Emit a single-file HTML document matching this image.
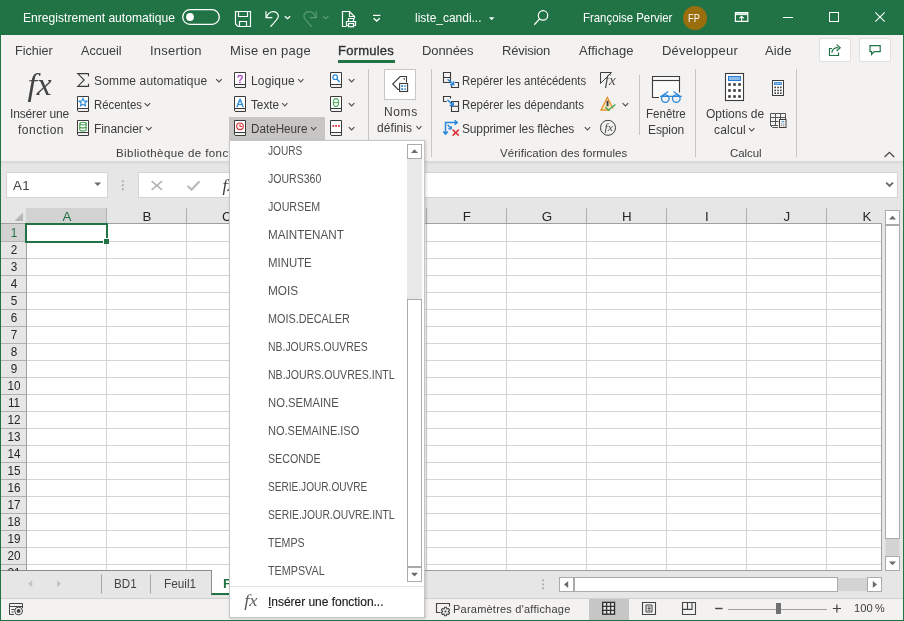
<!DOCTYPE html>
<html lang="fr">
<head>
<meta charset="utf-8">
<title>liste_candidats - Excel</title>
<style>
html,body{margin:0;padding:0;}
body{width:904px;height:621px;overflow:hidden;position:relative;background:#e6e6e6;font-family:"Liberation Sans",sans-serif;}
#win{position:absolute;left:0;top:0;width:904px;height:621px;overflow:hidden;}
#win *{position:absolute;box-sizing:border-box;}
.t{white-space:pre;line-height:normal;transform-origin:0 0;}
svg{overflow:visible;}
#title{left:0;top:0;width:904px;height:35px;background:#217346;}
#tabs{left:1px;top:35px;width:902px;height:30px;background:#f3f2f1;}
#ribbon{left:1px;top:65px;width:902px;height:96px;background:#f3f2f1;}
#rshadow{left:1px;top:161px;width:902px;height:4px;background:linear-gradient(#d6d6d6,#e6e6e6);}
.vsep{width:1px;background:#c8c6c4;}
#bl{left:0;top:35px;width:1px;height:586px;background:#217346;}
#br{left:903px;top:35px;width:1px;height:586px;background:#217346;}
#bb{left:0;top:620px;width:904px;height:1px;background:#217346;}
.tbtn{background:#fff;border:1px solid #e1dfdd;border-radius:2px;}
#namebox,#fxbox{background:#fff;border:1px solid #d4d4d4;}
#gridwrap{will-change:transform;left:1px;top:207px;width:881px;height:364px;background:#fff;overflow:hidden;}
#sheetbar{left:1px;top:571px;width:902px;height:27px;background:#e6e6e6;}
#status{left:1px;top:598px;width:902px;height:22px;background:#f3f2f1;}
#menu{left:229px;top:140px;width:196px;height:478px;background:#fff;border:1px solid #c6c6c6;box-shadow:1px 1px 3px rgba(0,0,0,.18);}
</style>
</head>
<body>
<div id="win">
<div id="title"></div>
<div id="tabs"></div>
<div id="ribbon"></div>
<div id="rshadow"></div>

<!-- tab underline + top-right buttons -->
<div style="left:338px;top:60px;width:57px;height:3px;background:#217346"></div>
<div class="tbtn" style="left:819px;top:38px;width:32px;height:24px"></div>
<div class="tbtn" style="left:859px;top:38px;width:32px;height:24px"></div>

<!-- ribbon highlights / separators -->
<div style="left:229px;top:117px;width:96px;height:24px;background:#c8c6c4"></div>
<div class="vsep" style="left:368px;top:69px;height:88px"></div>
<div class="vsep" style="left:431px;top:69px;height:88px"></div>
<div class="vsep" style="left:639px;top:75px;height:60px"></div>
<div class="vsep" style="left:695px;top:69px;height:88px"></div>
<div class="vsep" style="left:796px;top:69px;height:88px"></div>
<div style="left:384px;top:69px;width:32px;height:31px;background:#fff;border:1px solid #c8c6c4"></div>

<!-- formula bar -->
<div id="namebox" style="left:6px;top:172px;width:102px;height:26px"></div>
<div id="fxbox" style="left:138px;top:172px;width:760px;height:26px"></div>

<!-- grid -->
<div id="gridwrap">
<div style="left:0;top:0;width:881px;height:17px;background:#e6e6e6"></div>
<div style="left:0;top:17px;width:26px;height:347px;background:#e6e6e6"></div>
<div style="left:25px;top:1px;width:81px;height:15px;background:#d2d2d2"></div>
<div style="left:0;top:17px;width:26px;height:17px;background:#d2d2d2"></div>
<div style="left:105px;top:17px;width:1px;height:347px;background:#d4d4d4"></div>
<div style="left:105px;top:1px;width:1px;height:15px;background:#b1b1b1"></div>
<div style="left:185px;top:17px;width:1px;height:347px;background:#d4d4d4"></div>
<div style="left:185px;top:1px;width:1px;height:15px;background:#b1b1b1"></div>
<div style="left:265px;top:17px;width:1px;height:347px;background:#d4d4d4"></div>
<div style="left:265px;top:1px;width:1px;height:15px;background:#b1b1b1"></div>
<div style="left:345px;top:17px;width:1px;height:347px;background:#d4d4d4"></div>
<div style="left:345px;top:1px;width:1px;height:15px;background:#b1b1b1"></div>
<div style="left:425px;top:17px;width:1px;height:347px;background:#d4d4d4"></div>
<div style="left:425px;top:1px;width:1px;height:15px;background:#b1b1b1"></div>
<div style="left:505px;top:17px;width:1px;height:347px;background:#d4d4d4"></div>
<div style="left:505px;top:1px;width:1px;height:15px;background:#b1b1b1"></div>
<div style="left:585px;top:17px;width:1px;height:347px;background:#d4d4d4"></div>
<div style="left:585px;top:1px;width:1px;height:15px;background:#b1b1b1"></div>
<div style="left:665px;top:17px;width:1px;height:347px;background:#d4d4d4"></div>
<div style="left:665px;top:1px;width:1px;height:15px;background:#b1b1b1"></div>
<div style="left:745px;top:17px;width:1px;height:347px;background:#d4d4d4"></div>
<div style="left:745px;top:1px;width:1px;height:15px;background:#b1b1b1"></div>
<div style="left:825px;top:17px;width:1px;height:347px;background:#d4d4d4"></div>
<div style="left:825px;top:1px;width:1px;height:15px;background:#b1b1b1"></div>
<div style="left:25px;top:34px;width:855px;height:1px;background:#d4d4d4"></div>
<div style="left:0;top:34px;width:26px;height:1px;background:#b1b1b1"></div>
<div style="left:25px;top:51px;width:855px;height:1px;background:#d4d4d4"></div>
<div style="left:0;top:51px;width:26px;height:1px;background:#b1b1b1"></div>
<div style="left:25px;top:68px;width:855px;height:1px;background:#d4d4d4"></div>
<div style="left:0;top:68px;width:26px;height:1px;background:#b1b1b1"></div>
<div style="left:25px;top:85px;width:855px;height:1px;background:#d4d4d4"></div>
<div style="left:0;top:85px;width:26px;height:1px;background:#b1b1b1"></div>
<div style="left:25px;top:102px;width:855px;height:1px;background:#d4d4d4"></div>
<div style="left:0;top:102px;width:26px;height:1px;background:#b1b1b1"></div>
<div style="left:25px;top:119px;width:855px;height:1px;background:#d4d4d4"></div>
<div style="left:0;top:119px;width:26px;height:1px;background:#b1b1b1"></div>
<div style="left:25px;top:136px;width:855px;height:1px;background:#d4d4d4"></div>
<div style="left:0;top:136px;width:26px;height:1px;background:#b1b1b1"></div>
<div style="left:25px;top:153px;width:855px;height:1px;background:#d4d4d4"></div>
<div style="left:0;top:153px;width:26px;height:1px;background:#b1b1b1"></div>
<div style="left:25px;top:170px;width:855px;height:1px;background:#d4d4d4"></div>
<div style="left:0;top:170px;width:26px;height:1px;background:#b1b1b1"></div>
<div style="left:25px;top:187px;width:855px;height:1px;background:#d4d4d4"></div>
<div style="left:0;top:187px;width:26px;height:1px;background:#b1b1b1"></div>
<div style="left:25px;top:204px;width:855px;height:1px;background:#d4d4d4"></div>
<div style="left:0;top:204px;width:26px;height:1px;background:#b1b1b1"></div>
<div style="left:25px;top:221px;width:855px;height:1px;background:#d4d4d4"></div>
<div style="left:0;top:221px;width:26px;height:1px;background:#b1b1b1"></div>
<div style="left:25px;top:238px;width:855px;height:1px;background:#d4d4d4"></div>
<div style="left:0;top:238px;width:26px;height:1px;background:#b1b1b1"></div>
<div style="left:25px;top:255px;width:855px;height:1px;background:#d4d4d4"></div>
<div style="left:0;top:255px;width:26px;height:1px;background:#b1b1b1"></div>
<div style="left:25px;top:272px;width:855px;height:1px;background:#d4d4d4"></div>
<div style="left:0;top:272px;width:26px;height:1px;background:#b1b1b1"></div>
<div style="left:25px;top:289px;width:855px;height:1px;background:#d4d4d4"></div>
<div style="left:0;top:289px;width:26px;height:1px;background:#b1b1b1"></div>
<div style="left:25px;top:306px;width:855px;height:1px;background:#d4d4d4"></div>
<div style="left:0;top:306px;width:26px;height:1px;background:#b1b1b1"></div>
<div style="left:25px;top:323px;width:855px;height:1px;background:#d4d4d4"></div>
<div style="left:0;top:323px;width:26px;height:1px;background:#b1b1b1"></div>
<div style="left:25px;top:340px;width:855px;height:1px;background:#d4d4d4"></div>
<div style="left:0;top:340px;width:26px;height:1px;background:#b1b1b1"></div>
<div style="left:25px;top:357px;width:855px;height:1px;background:#d4d4d4"></div>
<div style="left:0;top:357px;width:26px;height:1px;background:#b1b1b1"></div>
<div style="left:0;top:16px;width:881px;height:1px;background:#9f9f9f"></div>
<div style="left:25px;top:17px;width:1px;height:347px;background:#9f9f9f"></div>
<div style="left:880px;top:16px;width:1px;height:348px;background:#9f9f9f"></div>
<div style="left:0;top:363px;width:211px;height:1px;background:#8c8c8c"></div>
<div style="left:275px;top:363px;width:606px;height:1px;background:#9f9f9f"></div>
<span class="t" style="left:45.900000000000006px;width:40px;text-align:center;top:2px;font-size:13.33px;color:#217346">A</span>
<span class="t" style="left:125.9px;width:40px;text-align:center;top:2px;font-size:13.33px;color:#262626">B</span>
<span class="t" style="left:205.9px;width:40px;text-align:center;top:2px;font-size:13.33px;color:#262626">C</span>
<span class="t" style="left:285.9px;width:40px;text-align:center;top:2px;font-size:13.33px;color:#262626">D</span>
<span class="t" style="left:365.9px;width:40px;text-align:center;top:2px;font-size:13.33px;color:#262626">E</span>
<span class="t" style="left:445.9px;width:40px;text-align:center;top:2px;font-size:13.33px;color:#262626">F</span>
<span class="t" style="left:525.9px;width:40px;text-align:center;top:2px;font-size:13.33px;color:#262626">G</span>
<span class="t" style="left:605.9px;width:40px;text-align:center;top:2px;font-size:13.33px;color:#262626">H</span>
<span class="t" style="left:685.9px;width:40px;text-align:center;top:2px;font-size:13.33px;color:#262626">I</span>
<span class="t" style="left:765.9px;width:40px;text-align:center;top:2px;font-size:13.33px;color:#262626">J</span>
<span class="t" style="left:845.9px;width:40px;text-align:center;top:2px;font-size:13.33px;color:#262626">K</span>
<span class="t" style="left:0px;width:26px;text-align:center;top:18px;font-size:13.33px;color:#217346;transform:scaleX(.88);transform-origin:13.5px 0">1</span>
<span class="t" style="left:0px;width:26px;text-align:center;top:35px;font-size:13.33px;color:#262626;transform:scaleX(.88);transform-origin:13.5px 0">2</span>
<span class="t" style="left:0px;width:26px;text-align:center;top:52px;font-size:13.33px;color:#262626;transform:scaleX(.88);transform-origin:13.5px 0">3</span>
<span class="t" style="left:0px;width:26px;text-align:center;top:69px;font-size:13.33px;color:#262626;transform:scaleX(.88);transform-origin:13.5px 0">4</span>
<span class="t" style="left:0px;width:26px;text-align:center;top:86px;font-size:13.33px;color:#262626;transform:scaleX(.88);transform-origin:13.5px 0">5</span>
<span class="t" style="left:0px;width:26px;text-align:center;top:103px;font-size:13.33px;color:#262626;transform:scaleX(.88);transform-origin:13.5px 0">6</span>
<span class="t" style="left:0px;width:26px;text-align:center;top:120px;font-size:13.33px;color:#262626;transform:scaleX(.88);transform-origin:13.5px 0">7</span>
<span class="t" style="left:0px;width:26px;text-align:center;top:137px;font-size:13.33px;color:#262626;transform:scaleX(.88);transform-origin:13.5px 0">8</span>
<span class="t" style="left:0px;width:26px;text-align:center;top:154px;font-size:13.33px;color:#262626;transform:scaleX(.88);transform-origin:13.5px 0">9</span>
<span class="t" style="left:0px;width:26px;text-align:center;top:171px;font-size:13.33px;color:#262626;transform:scaleX(.88);transform-origin:13.5px 0">10</span>
<span class="t" style="left:0px;width:26px;text-align:center;top:188px;font-size:13.33px;color:#262626;transform:scaleX(.88);transform-origin:13.5px 0">11</span>
<span class="t" style="left:0px;width:26px;text-align:center;top:205px;font-size:13.33px;color:#262626;transform:scaleX(.88);transform-origin:13.5px 0">12</span>
<span class="t" style="left:0px;width:26px;text-align:center;top:222px;font-size:13.33px;color:#262626;transform:scaleX(.88);transform-origin:13.5px 0">13</span>
<span class="t" style="left:0px;width:26px;text-align:center;top:239px;font-size:13.33px;color:#262626;transform:scaleX(.88);transform-origin:13.5px 0">14</span>
<span class="t" style="left:0px;width:26px;text-align:center;top:256px;font-size:13.33px;color:#262626;transform:scaleX(.88);transform-origin:13.5px 0">15</span>
<span class="t" style="left:0px;width:26px;text-align:center;top:273px;font-size:13.33px;color:#262626;transform:scaleX(.88);transform-origin:13.5px 0">16</span>
<span class="t" style="left:0px;width:26px;text-align:center;top:290px;font-size:13.33px;color:#262626;transform:scaleX(.88);transform-origin:13.5px 0">17</span>
<span class="t" style="left:0px;width:26px;text-align:center;top:307px;font-size:13.33px;color:#262626;transform:scaleX(.88);transform-origin:13.5px 0">18</span>
<span class="t" style="left:0px;width:26px;text-align:center;top:324px;font-size:13.33px;color:#262626;transform:scaleX(.88);transform-origin:13.5px 0">19</span>
<span class="t" style="left:0px;width:26px;text-align:center;top:341px;font-size:13.33px;color:#262626;transform:scaleX(.88);transform-origin:13.5px 0">20</span>
<span class="t" style="left:0px;width:26px;text-align:center;top:358px;font-size:13.33px;color:#262626;transform:scaleX(.88);transform-origin:13.5px 0">21</span>
<svg style="left:8px;top:4px" width="15" height="11"><path d="M14 1.5V10H5.5Z" fill="#b7b7b7"/></svg>
<div style="left:24px;top:16px;width:83px;height:20px;border:2px solid #217346"></div>
<div style="left:102px;top:31px;width:5px;height:5px;background:#217346;border-left:1px solid #fff;border-top:1px solid #fff;box-sizing:content-box"></div>
</div>

<!-- sheet bar & status -->
<div id="sheetbar"></div>
<div id="status"></div>

<svg style="left:0;top:0;will-change:transform" width="904" height="621" viewBox="0 0 904 621"><rect x="182.7" y="9.7" width="36.6" height="14.6" rx="7.3" fill="none" stroke="#fff" stroke-width="1.3"/>
<circle cx="190" cy="17" r="3.9" fill="#fff"/>
<path d="M235.5 11.5H250.5V26.5H238L235.5 24Z M238.5 11.5V16.5H247.5V11.5 M239.5 26.5V21.5H246.5V26.5" fill="none" stroke="#fff" stroke-width="1.2"/>
<path d="M266 11.3V17.6H272.3" fill="none" stroke="#fff" stroke-width="1.2"/>
<path d="M266.2 17.4C268 13.5 271 11.6 273.6 11.7C276.8 11.9 278.6 14.4 278.3 16.8C278 19 276.5 20.5 270.4 26.7" fill="none" stroke="#fff" stroke-width="1.2"/>
<path d="M284.8 16.2L287.5 18.7L290.2 16.2" fill="none" stroke="#fff" stroke-width="1.3"/>
<path d="M316.2 11.3V17.6H309.9" fill="none" stroke="#5b9a78" stroke-width="1.2"/>
<path d="M316 17.4C314.2 13.5 311.2 11.6 308.6 11.7C305.4 11.9 303.6 14.4 303.9 16.8C304.2 19 305.7 20.5 311.8 26.7" fill="none" stroke="#5b9a78" stroke-width="1.2"/>
<path d="M323 16.2L325.7 18.7L328.4 16.2" fill="none" stroke="#5b9a78" stroke-width="1.3"/>
<path d="M346.5 26.5H342.5V11.5H349.5L354.5 16.5V18.5 M349.5 11.5V16.5H354.5" fill="none" stroke="#fff" stroke-width="1.2"/>
<path d="M348.5 21.5V18.5H353.5V21.5 M348.5 25.5H346.5V21.5H355.5V25.5H353.5" fill="none" stroke="#fff" stroke-width="1.2"/>
<rect x="348.5" y="23.5" width="5" height="3.2" fill="#217346" stroke="#fff" stroke-width="1.2"/>
<path d="M373 15.4H380.4" stroke="#fff" stroke-width="1.2"/>
<path d="M373.6 18.2L376.7 21L379.8 18.2" fill="none" stroke="#fff" stroke-width="1.3"/>
<path d="M489 17.2H494.4L491.7 20.2Z" fill="#fff"/>
<circle cx="543" cy="15.4" r="4.7" fill="none" stroke="#fff" stroke-width="1.2"/>
<path d="M539.6 18.9L534.3 24.7" stroke="#fff" stroke-width="1.3"/>
<circle cx="695" cy="18" r="12" fill="#9a6d0d"/>
<path d="M735.4 12.7H747.8V21.4H735.4Z M735.4 13.2H747.8" fill="none" stroke="#fff" stroke-width="1.2"/>
<path d="M735.4 14.6H747.8" stroke="#fff" stroke-width="1"/>
<path d="M741.6 21V16.4 M739.4 18.4L741.6 16.3L743.8 18.4" fill="none" stroke="#fff" stroke-width="1.1"/>
<path d="M783 17.5H793" stroke="#fff" stroke-width="1"/>
<rect x="829.5" y="12.5" width="9" height="9" fill="none" stroke="#fff" stroke-width="1"/>
<path d="M875.3 12.3L884.7 21.7M884.7 12.3L875.3 21.7" stroke="#fff" stroke-width="1.1"/>
<path d="M832 48.5H829.5V55.5H838.5V52.5" fill="none" stroke="#217346" stroke-width="1.2"/>
<path d="M831.8 52.6C832.3 49 835 47.6 838.2 47.6" fill="none" stroke="#217346" stroke-width="1.2"/>
<path d="M836.6 44.6L840.2 47.8L836.6 51" fill="none" stroke="#217346" stroke-width="1.2"/>
<path d="M870 45.6H880.2V51.6H874.2L871.6 54.4V51.6H870Z" fill="none" stroke="#217346" stroke-width="1.2"/>
<path d="M88.5 76.3V73.6H77.8L84.2 80L77.8 86.4H88.5V83.7" fill="none" stroke="#3b3b3b" stroke-width="1.1"/>
<path d="M77.5 96.5H88.5V111.5H79Q77.5 111.5 77.5 110Z M77.5 108.5H88.5" fill="#fff" stroke="#3b3b3b" stroke-width="1"/>
<path d="M78.5 109H88V111H79Q78.5 111 78.5 110Z" fill="#f3f2f1"/>
<path d="M77.5 120.5H88.5V135.5H79Q77.5 135.5 77.5 134Z M77.5 132.5H88.5" fill="#fff" stroke="#3b3b3b" stroke-width="1"/>
<path d="M78.5 133H88V135H79Q78.5 135 78.5 134Z" fill="#f3f2f1"/>
<path d="M83.00 98.20L84.12 100.86L86.99 101.10L84.81 102.99L85.47 105.80L83.00 104.30L80.53 105.80L81.19 102.99L79.01 101.10L81.88 100.86Z" fill="none" stroke="#2b88d8" stroke-width="1.1"/>
<path d="M79.8 123.6V129.8C79.8 131.4 86.2 131.4 86.2 129.8V123.6" fill="none" stroke="#3f9b4a" stroke-width="1.1"/>
<ellipse cx="83" cy="123.6" rx="3.2" ry="1.4" fill="none" stroke="#3f9b4a" stroke-width="1.1"/>
<path d="M79.8 126.7C79.8 128.3 86.2 128.3 86.2 126.7" fill="none" stroke="#3f9b4a" stroke-width="1.1"/>
<path d="M234.5 72.5H245.5V87.5H236Q234.5 87.5 234.5 86Z M234.5 84.5H245.5" fill="#fff" stroke="#3b3b3b" stroke-width="1"/>
<path d="M235.5 85H245V87H236Q235.5 87 235.5 86Z" fill="#f3f2f1"/>
<path d="M234.5 96.5H245.5V111.5H236Q234.5 111.5 234.5 110Z M234.5 108.5H245.5" fill="#fff" stroke="#3b3b3b" stroke-width="1"/>
<path d="M235.5 109H245V111H236Q235.5 111 235.5 110Z" fill="#f3f2f1"/>
<path d="M234.5 120.5H245.5V135.5H236Q234.5 135.5 234.5 134Z M234.5 132.5H245.5" fill="#fff" stroke="#3b3b3b" stroke-width="1"/>
<path d="M235.5 133H245V135H236Q235.5 135 235.5 134Z" fill="#f3f2f1"/>
<text x="240" y="83" font-family="Liberation Sans,sans-serif" font-size="11" font-weight="400" fill="#a33cc4" stroke="#a33cc4" stroke-width=".3" text-anchor="middle">?</text>
<text x="240" y="106.6" font-family="Liberation Sans,sans-serif" font-size="10.5" font-weight="400" fill="#2b88d8" stroke="#2b88d8" stroke-width=".35" text-anchor="middle">A</text>
<circle cx="240" cy="126.3" r="3.3" fill="none" stroke="#e3343a" stroke-width="1.2"/>
<path d="M240 124.2V126.5H242" fill="none" stroke="#e3343a" stroke-width="1.1"/>
<path d="M330.5 72.5H341.5V87.5H332Q330.5 87.5 330.5 86Z M330.5 84.5H341.5" fill="#fff" stroke="#3b3b3b" stroke-width="1"/>
<path d="M331.5 85H341V87H332Q331.5 87 331.5 86Z" fill="#f3f2f1"/>
<path d="M330.5 96.5H341.5V111.5H332Q330.5 111.5 330.5 110Z M330.5 108.5H341.5" fill="#fff" stroke="#3b3b3b" stroke-width="1"/>
<path d="M331.5 109H341V111H332Q331.5 111 331.5 110Z" fill="#f3f2f1"/>
<path d="M330.5 120.5H341.5V135.5H332Q330.5 135.5 330.5 134Z M330.5 132.5H341.5" fill="#fff" stroke="#3b3b3b" stroke-width="1"/>
<path d="M331.5 133H341V135H332Q331.5 135 331.5 134Z" fill="#f3f2f1"/>
<circle cx="335.2" cy="77.2" r="2.3" fill="none" stroke="#2b88d8" stroke-width="1.2"/>
<path d="M336.9 79L339.6 82" stroke="#2b88d8" stroke-width="1.3"/>
<ellipse cx="336" cy="102.6" rx="2.6" ry="4" fill="none" stroke="#4ea85a" stroke-width="1.1"/>
<path d="M333.5 102.6H338.5" stroke="#4ea85a" stroke-width="1.1"/>
<rect x="332.4" y="125" width="1.8" height="1.8" fill="#e3343a"/>
<rect x="335.2" y="125" width="1.8" height="1.8" fill="#e3343a"/>
<rect x="338.0" y="125" width="1.8" height="1.8" fill="#e3343a"/>
<path d="M216.2 79.1L219.0 82.0L221.8 79.1" fill="none" stroke="#4a4a4a" stroke-width="1.1"/>
<path d="M144.6 103.1L147.39999999999998 106.0L150.2 103.1" fill="none" stroke="#4a4a4a" stroke-width="1.1"/>
<path d="M146 127.1L148.8 130.0L151.6 127.1" fill="none" stroke="#4a4a4a" stroke-width="1.1"/>
<path d="M298.2 79.1L300.79999999999995 82.0L303.4 79.1" fill="none" stroke="#4a4a4a" stroke-width="1.1"/>
<path d="M282.2 103.1L284.79999999999995 106.0L287.4 103.1" fill="none" stroke="#4a4a4a" stroke-width="1.1"/>
<path d="M311 127.1L313.6 130.0L316.2 127.1" fill="none" stroke="#4a4a4a" stroke-width="1.1"/>
<path d="M348.8 79.1L351.6 82.0L354.4 79.1" fill="none" stroke="#4a4a4a" stroke-width="1.1"/>
<path d="M348.8 103.1L351.6 106.0L354.4 103.1" fill="none" stroke="#4a4a4a" stroke-width="1.1"/>
<path d="M348.8 127.1L351.6 130.0L354.4 127.1" fill="none" stroke="#4a4a4a" stroke-width="1.1"/>
<path d="M416.4 126.1L418.9 129.0L421.4 126.1" fill="none" stroke="#4a4a4a" stroke-width="1.1"/>
<path d="M622.6 103.1L625.4000000000001 106.0L628.2 103.1" fill="none" stroke="#4a4a4a" stroke-width="1.1"/>
<path d="M584.8 127.1L587.5 130.0L590.2 127.1" fill="none" stroke="#4a4a4a" stroke-width="1.1"/>
<path d="M749 128.1L751.7 131.0L754.4 128.1" fill="none" stroke="#4a4a4a" stroke-width="1.1"/>
<text x="27.4" y="94.8" font-family="Liberation Serif,serif" font-style="italic" font-size="31" fill="#444" textLength="24.2" lengthAdjust="spacingAndGlyphs">fx</text>
<path d="M399.5 89.5H398L392.7 84L400.2 76.5H406.5V82.5" fill="none" stroke="#3b3b3b" stroke-width="1.1"/>
<rect x="403.6" y="78.2" width="1.4" height="1.4" fill="#3b3b3b"/>
<rect x="399.6" y="83.5" width="8" height="8" fill="#fff" stroke="#3b3b3b" stroke-width="1.1"/>
<rect x="401.2" y="85.2" width="1.8" height="1.8" fill="#2b88d8"/><rect x="401.2" y="88.2" width="1.8" height="1.8" fill="#2b88d8"/>
<rect x="404" y="85.5" width="2.2" height="1.2" fill="#2b88d8"/><rect x="404" y="88.5" width="2.2" height="1.2" fill="#2b88d8"/>
<path d="M443.5 72.5H450.5V82.5H443.5Z M443.5 77.5H450.5" fill="none" stroke="#3b3b3b" stroke-width="1.1"/>
<path d="M455 82.5H458.5V87.5H451.5V85.6" fill="none" stroke="#3b3b3b" stroke-width="1.1"/>
<path d="M447.6 79.2L453.2 84.4 M450 84.8H453.6V81.2" fill="none" stroke="#2b88d8" stroke-width="1.5"/>
<path d="M446.6 101.5H443.5V96.5H450.5V98.6" fill="none" stroke="#3b3b3b" stroke-width="1.1"/>
<path d="M451.5 101.5H458.5V111.5H451.5Z M451.5 106.3H458.5" fill="none" stroke="#3b3b3b" stroke-width="1.1"/>
<path d="M447.4 99.8L452.8 105 M449.6 105.4H453.2V101.8" fill="none" stroke="#2b88d8" stroke-width="1.5"/>
<path d="M445.5 133.8V122.5H457 M443.2 131.4L445.5 134L447.8 131.4 M454.6 120.2L457.2 122.5L454.6 124.8" fill="none" stroke="#2b88d8" stroke-width="1.5"/>
<path d="M447.6 124.8L450.8 128.4 M448.2 128.9H451.2V125.9" fill="none" stroke="#2b88d8" stroke-width="1.3"/>
<path d="M452.6 129.6L458.8 135.6M458.8 129.6L452.6 135.6" stroke="#e3343a" stroke-width="1.5"/>
<path d="M600.5 72.5H611.5L600.5 83.5Z" fill="none" stroke="#3b3b3b" stroke-width="1"/>
<text x="604.8" y="84.8" font-family="Liberation Serif,serif" font-style="italic" font-size="15" fill="#4a4a4a" textLength="11" lengthAdjust="spacingAndGlyphs">fx</text>
<path d="M607.4 97.4L601 110H613.8Z" fill="#fbe3bd" stroke="#e8912d" stroke-width="1.3" stroke-linejoin="miter"/>
<rect x="606.6" y="100.8" width="1.9" height="5.4" fill="#3b3b3b"/>
<rect x="610" y="108.6" width="5" height="2.4" fill="#f3f2f1"/>
<path d="M605.4 107L608.4 110.2L615.4 104.4" fill="none" stroke="#3aa655" stroke-width="1.3"/>
<circle cx="608" cy="127.8" r="7.5" fill="none" stroke="#3b3b3b" stroke-width="1"/>
<text x="604.4" y="130.8" font-family="Liberation Serif,serif" font-style="italic" font-size="11" fill="#4a4a4a" textLength="8.6" lengthAdjust="spacingAndGlyphs">fx</text>
<path d="M659 97.5H652.5V76.5H679.5V92.5" fill="#fafafa" stroke="#3b3b3b" stroke-width="1.1"/>
<path d="M652.5 80.5H679.5" stroke="#3b3b3b" stroke-width="1.1"/>
<circle cx="665.3" cy="98.6" r="3.8" fill="#f3f2f1" stroke="#2b88d8" stroke-width="1.3"/><circle cx="676.3" cy="98.6" r="3.8" fill="#f3f2f1" stroke="#2b88d8" stroke-width="1.3"/>
<path d="M660 96.3H681.8 M661.4 96.2L668.2 91.6 M680.2 96.2L673.4 91.6" fill="none" stroke="#2b88d8" stroke-width="1.25"/>
<rect x="725.5" y="73.5" width="18" height="27" fill="#fff" stroke="#3b3b3b" stroke-width="1.1"/>
<rect x="728.5" y="76.5" width="12" height="4" fill="#8dbde8" stroke="#2b7cd3" stroke-width="1"/>
<rect x="728.2" y="83.2" width="2.6" height="2.6" fill="#3b3b3b"/>
<rect x="733.2" y="83.2" width="2.6" height="2.6" fill="#3b3b3b"/>
<rect x="738.2" y="83.2" width="2.6" height="2.6" fill="#3b3b3b"/>
<rect x="728.2" y="89.2" width="2.6" height="2.6" fill="#3b3b3b"/>
<rect x="733.2" y="89.2" width="2.6" height="2.6" fill="#3b3b3b"/>
<rect x="738.2" y="89.2" width="2.6" height="2.6" fill="#3b3b3b"/>
<rect x="728.2" y="95.2" width="2.6" height="2.6" fill="#3b3b3b"/>
<rect x="733.2" y="95.2" width="2.6" height="2.6" fill="#3b3b3b"/>
<rect x="738.2" y="95.2" width="2.6" height="2.6" fill="#3b3b3b"/>
<rect x="772.5" y="80.5" width="11" height="15" fill="#fff" stroke="#3b3b3b" stroke-width="1"/>
<rect x="774.6" y="82.6" width="6.8" height="2" fill="#8dbde8" stroke="#2b7cd3" stroke-width=".8"/>
<rect x="774.4" y="86.6" width="1.6" height="1.6" fill="#3b3b3b"/>
<rect x="777.2" y="86.6" width="1.6" height="1.6" fill="#3b3b3b"/>
<rect x="780" y="86.6" width="1.6" height="1.6" fill="#3b3b3b"/>
<rect x="774.4" y="89.6" width="1.6" height="1.6" fill="#3b3b3b"/>
<rect x="777.2" y="89.6" width="1.6" height="1.6" fill="#3b3b3b"/>
<rect x="780" y="89.6" width="1.6" height="1.6" fill="#3b3b3b"/>
<rect x="774.4" y="92.4" width="1.6" height="1.6" fill="#3b3b3b"/>
<rect x="777.2" y="92.4" width="1.6" height="1.6" fill="#3b3b3b"/>
<rect x="780" y="92.4" width="1.6" height="1.6" fill="#3b3b3b"/>
<path d="M770.5 113.5H785.5V119.5 M770.5 113.5V125.5H778 M770.5 117.5H785.5 M770.5 121.5H778.5 M775.5 113.5V125.5 M780.5 113.5V119" fill="none" stroke="#555" stroke-width="1"/>
<path d="M770.5 125.5L772.5 127.5H778" fill="none" stroke="#555" stroke-width="1"/>
<rect x="779.5" y="119.5" width="6.5" height="8" fill="#fff" stroke="#3b3b3b" stroke-width="1"/>
<rect x="781.3" y="121.2" width="3" height="1" fill="#2b88d8"/>
<rect x="781.2" y="123.4" width="1" height="1" fill="#3b3b3b"/>
<rect x="783.3" y="123.4" width="1" height="1" fill="#3b3b3b"/>
<rect x="781.2" y="125.3" width="1" height="1" fill="#3b3b3b"/>
<rect x="783.3" y="125.3" width="1" height="1" fill="#3b3b3b"/>
<path d="M884.6 157L889.4 152.4L894.2 157" fill="none" stroke="#444" stroke-width="1.2"/>
<path d="M94.2 182.4H101.2L97.7 186Z" fill="#6b6b6b"/>
<rect x="121.9" y="180.4" width="1.8" height="1.8" fill="#a8a8a8"/>
<rect x="121.9" y="184.4" width="1.8" height="1.8" fill="#a8a8a8"/>
<rect x="121.9" y="188.4" width="1.8" height="1.8" fill="#a8a8a8"/>
<path d="M151.6 181.2L162 189.8M162 181.2L151.6 189.8" stroke="#b4b4b4" stroke-width="1.6"/>
<path d="M187.6 186L191.6 189.6L199.6 181.2" fill="none" stroke="#bdbdbd" stroke-width="2.3"/>
<text x="222.6" y="190.5" font-family="Liberation Serif,serif" font-style="italic" font-size="17" fill="#3b3b3b">fx</text>
<path d="M886.2 182.6L889.6 186L893 182.6" fill="none" stroke="#666" stroke-width="1.8"/>
<rect x="885" y="207" width="16" height="364" fill="#e6e6e6"/>
<rect x="885.5" y="539" width="14" height="17" fill="#d3d3d3"/>
<rect x="885.5" y="210.5" width="14" height="14" fill="#fff" stroke="#ababab"/>
<rect x="885.5" y="225.5" width="14" height="313" fill="#fff" stroke="#ababab"/>
<rect x="885.5" y="556.5" width="14" height="14" fill="#fff" stroke="#ababab"/>
<path d="M889 219.4H896L892.5 215.8Z" fill="#6b6b6b"/>
<path d="M889 561.6H896L892.5 565.2Z" fill="#6b6b6b"/>
<rect x="838" y="578" width="29" height="13" fill="#d3d3d3"/>
<rect x="559.5" y="577.5" width="14" height="14" fill="#fff" stroke="#ababab"/>
<rect x="574.5" y="577.5" width="263" height="14" fill="#fff" stroke="#ababab"/>
<rect x="867.5" y="577.5" width="14" height="14" fill="#fff" stroke="#ababab"/>
<path d="M568.2 581V588L564 584.5Z" fill="#6b6b6b"/>
<path d="M872.8 581V588L877 584.5Z" fill="#6b6b6b"/>
<rect x="542.1" y="579.4" width="1.8" height="1.8" fill="#a8a8a8"/>
<rect x="542.1" y="583.4" width="1.8" height="1.8" fill="#a8a8a8"/>
<rect x="542.1" y="587.4" width="1.8" height="1.8" fill="#a8a8a8"/>
<path d="M32.2 580.2V587.2L28 583.7Z" fill="#c4c4c4"/>
<path d="M57 580.2V587.2L61.2 583.7Z" fill="#c4c4c4"/>
<path d="M101.5 574.5V593.5 M150.5 574.5V593.5" stroke="#a6a6a6" stroke-width="1"/>
<rect x="212" y="570" width="64" height="24" fill="#fff"/>
<path d="M211 594H276" stroke="#217346" stroke-width="2"/>
<path d="M211.5 570V594" stroke="#8c8c8c" stroke-width="1"/>
<path d="M1 598.5H903" stroke="#d0d0d0" stroke-width="1"/>
<path d="M9.5 614.5V603.5H22.5V608 M9.5 606.5H22.5 M9.5 614.5H14 M11.5 609.5H14.5 M11.5 612H13.5" fill="none" stroke="#444" stroke-width="1"/>
<circle cx="18.6" cy="611" r="3.9" fill="#f3f2f1" stroke="#444" stroke-width="1"/><circle cx="18.6" cy="611" r="1.9" fill="#444"/>
<path d="M440.5 612.5H436.5V603.5H449.5V606.5" fill="none" stroke="#444" stroke-width="1.1"/>
<path d="M444.56 607.30L446.44 607.30L446.90 609.08L448.66 608.59L449.60 610.21L448.30 611.50L449.60 612.79L448.66 614.41L446.90 613.92L446.44 615.70L444.56 615.70L444.10 613.92L442.34 614.41L441.40 612.79L442.70 611.50L441.40 610.21L442.34 608.59L444.10 609.08Z" fill="#f3f2f1" stroke="#444" stroke-width="1.1" stroke-linejoin="round"/>
<path d="M445.5 610.3L446.7 611.5L445.5 612.7L444.3 611.5Z" fill="#444"/>
<rect x="589" y="599" width="40" height="21" fill="#c6c6c6"/>
<rect x="602.7" y="602.4" width="11.8" height="11.8" fill="#ececec" stroke="#333" stroke-width="1.4"/>
<path d="M602.7 606.4H614.5 M602.7 610.3H614.5 M606.6 602.4V614.2 M610.6 602.4V614.2" fill="none" stroke="#333" stroke-width="1.3"/>
<path d="M642.5 602.5H655.5V614.5H642.5Z" fill="none" stroke="#444" stroke-width="1.1"/>
<path d="M646 605H652V612H646Z M647.6 607H650.6M647.6 608.6H650.6M647.6 610.2H650.6" fill="none" stroke="#444" stroke-width="1"/>
<path d="M682.5 602.5H695.5V614.5H682.5Z" fill="none" stroke="#444" stroke-width="1.1"/>
<path d="M682.5 609.4H692V602.5 M687.5 602.5V609.4" fill="none" stroke="#444" stroke-width="1.1"/>
<path d="M715.2 608.5H722.6" stroke="#444" stroke-width="1.4"/>
<path d="M728 609.5H827" stroke="#a0a0a0" stroke-width="1"/>
<path d="M832.8 608.5H841 M836.9 604.4V612.6" stroke="#444" stroke-width="1.2"/>
<rect x="776" y="603" width="5" height="11" fill="#707070"/></svg>

<div id="tx" style="left:0;top:0;width:904px;height:621px;will-change:transform">
<span class="t" style='left:23.00px;top:10px;font-size:13px;color:#fff;transform:scaleX(0.9306);'>Enregistrement automatique</span>
<span class="t" style='left:415.00px;top:10px;font-size:13px;color:#fff;transform:scaleX(0.9205);'>liste_candi...</span>
<span class="t" style='left:583.00px;top:10px;font-size:13px;color:#fff;transform:scaleX(0.8766);'>Françoise Pervier</span>
<span class="t" style='left:688.00px;top:12px;font-size:10.6px;color:#fff;transform:scaleX(0.8718);'>FP</span>
<span class="t" style='left:15.00px;top:43px;font-size:13px;color:#3c3c3c;transform:scaleX(0.9658);'>Fichier</span>
<span class="t" style='left:81.00px;top:43px;font-size:13px;color:#3c3c3c;transform:scaleX(0.9671);'>Accueil</span>
<span class="t" style='left:150.00px;top:43px;font-size:13px;color:#3c3c3c;letter-spacing:0.216px;'>Insertion</span>
<span class="t" style='left:230.00px;top:43px;font-size:13px;color:#3c3c3c;letter-spacing:0.234px;'>Mise en page</span>
<span class="t" style='left:338.00px;top:43px;font-size:13px;color:#333;letter-spacing:0.235px;-webkit-text-stroke:0.35px #333;'>Formules</span>
<span class="t" style='left:422.00px;top:43px;font-size:13px;color:#3c3c3c;letter-spacing:-0.090px;'>Données</span>
<span class="t" style='left:502.00px;top:43px;font-size:13px;color:#3c3c3c;letter-spacing:-0.219px;'>Révision</span>
<span class="t" style='left:579.00px;top:43px;font-size:13px;color:#3c3c3c;letter-spacing:0.061px;'>Affichage</span>
<span class="t" style='left:662.00px;top:43px;font-size:13px;color:#3c3c3c;letter-spacing:0.202px;'>Développeur</span>
<span class="t" style='left:765.00px;top:43px;font-size:13px;color:#3c3c3c;letter-spacing:0.147px;'>Aide</span>
<span class="t" style='left:10.00px;top:107px;font-size:12px;color:#3c3c3c;letter-spacing:-0.156px;'>Insérer une</span>
<span class="t" style='left:18.00px;top:123px;font-size:12px;color:#3c3c3c;letter-spacing:0.498px;'>fonction</span>
<span class="t" style='left:94.00px;top:74px;font-size:12px;color:#3c3c3c;letter-spacing:0.151px;'>Somme automatique</span>
<span class="t" style='left:94.00px;top:98px;font-size:12px;color:#3c3c3c;transform:scaleX(0.9455);'>Récentes</span>
<span class="t" style='left:94.00px;top:122px;font-size:12px;color:#3c3c3c;letter-spacing:-0.074px;'>Financier</span>
<span class="t" style='left:116.00px;top:147px;font-size:11.5px;color:#3c3c3c;letter-spacing:0.418px;'>Bibliothèque de fonctions</span>
<span class="t" style='left:251.00px;top:74px;font-size:12px;color:#3c3c3c;letter-spacing:0.161px;'>Logique</span>
<span class="t" style='left:251.00px;top:98px;font-size:12px;color:#3c3c3c;transform:scaleX(0.9773);'>Texte</span>
<span class="t" style='left:251.00px;top:122px;font-size:12px;color:#3c3c3c;transform:scaleX(0.9736);'>DateHeure</span>
<span class="t" style='left:384.00px;top:105px;font-size:12px;color:#3c3c3c;letter-spacing:0.597px;'>Noms</span>
<span class="t" style='left:377.00px;top:121px;font-size:12px;color:#3c3c3c;letter-spacing:0.067px;'>définis</span>
<span class="t" style='left:462.00px;top:74px;font-size:12px;color:#3c3c3c;transform:scaleX(0.9494);'>Repérer les antécédents</span>
<span class="t" style='left:462.00px;top:98px;font-size:12px;color:#3c3c3c;transform:scaleX(0.9526);'>Repérer les dépendants</span>
<span class="t" style='left:462.00px;top:122px;font-size:12px;color:#3c3c3c;letter-spacing:-0.158px;'>Supprimer les flèches</span>
<span class="t" style='left:500.00px;top:147px;font-size:11.5px;color:#3c3c3c;letter-spacing:0.053px;'>Vérification des formules</span>
<span class="t" style='left:646.00px;top:107px;font-size:12px;color:#3c3c3c;transform:scaleX(0.9622);'>Fenêtre</span>
<span class="t" style='left:648.00px;top:123px;font-size:12px;color:#3c3c3c;letter-spacing:-0.105px;'>Espion</span>
<span class="t" style='left:706.00px;top:107px;font-size:12px;color:#3c3c3c;letter-spacing:0.015px;'>Options de</span>
<span class="t" style='left:714.00px;top:123px;font-size:12px;color:#3c3c3c;letter-spacing:0.218px;'>calcul</span>
<span class="t" style='left:730.00px;top:147px;font-size:11.5px;color:#3c3c3c;letter-spacing:-0.092px;'>Calcul</span>
<span class="t" style='left:13.00px;top:178px;font-size:13.33px;color:#444;letter-spacing:0.453px;'>A1</span>
<span class="t" style='left:114.00px;top:576px;font-size:13px;color:#444;transform:scaleX(0.8944);'>BD1</span>
<span class="t" style='left:164.00px;top:576px;font-size:13px;color:#444;transform:scaleX(0.9076);'>Feuil1</span>
<span class="t" style='left:223.00px;top:576px;font-size:13px;color:#217346;font-weight:700;transform:scaleX(1.0334);'>Feuil2</span>
<span class="t" style='left:453.00px;top:603px;font-size:11px;color:#3c3c3c;letter-spacing:0.223px;'>Paramètres d&#x27;affichage</span>
<span class="t" style='left:854.00px;top:602px;font-size:11px;color:#3c3c3c;transform:scaleX(1.0186);'>100</span>
<span class="t" style='left:875.00px;top:602px;font-size:11px;color:#3c3c3c;transform:scaleX(0.9854);'>%</span>
</div>

<!-- dropdown menu -->
<div id="menu"></div>
<div style="left:407px;top:144px;width:15px;height:438px;background:#e8e8e8"></div>
<div style="left:407px;top:144px;width:15px;height:15px;background:#fff;border:1px solid #ababab"></div>
<div style="left:407px;top:567px;width:15px;height:15px;background:#fff;border:1px solid #ababab"></div>
<div style="left:407px;top:299px;width:15px;height:268px;background:#fff;border:1px solid #ababab"></div>
<div style="left:230px;top:586px;width:194px;height:1px;background:#e1e1e1"></div>

<svg style="left:0;top:0;will-change:transform" width="904" height="621" viewBox="0 0 904 621"><path d="M411 152.9H418L414.5 149.3Z" fill="#6b6b6b"/>
<path d="M411 572.8H418L414.5 576.4Z" fill="#6b6b6b"/>
<text x="244.2" y="606.3" font-family="Liberation Serif,serif" font-style="italic" font-size="17.5" fill="#5e5e5e" textLength="13.4" lengthAdjust="spacingAndGlyphs">fx</text>
<path d="M268.5 607.5H271.5" stroke="#333" stroke-width="1"/></svg>
<div id="mtx" style="left:0;top:0;width:904px;height:621px;will-change:transform">
<span class="t m" style='left:268.00px;top:144px;font-size:12px;color:#525252;transform:scaleX(0.8419);'>JOURS</span>
<span class="t m" style='left:268.00px;top:172px;font-size:12px;color:#525252;transform:scaleX(0.8780);'>JOURS360</span>
<span class="t m" style='left:268.00px;top:200px;font-size:12px;color:#525252;transform:scaleX(0.8905);'>JOURSEM</span>
<span class="t m" style='left:268.00px;top:228px;font-size:12px;color:#525252;transform:scaleX(0.9716);'>MAINTENANT</span>
<span class="t m" style='left:268.00px;top:256px;font-size:12px;color:#525252;transform:scaleX(0.9503);'>MINUTE</span>
<span class="t m" style='left:268.00px;top:284px;font-size:12px;color:#525252;transform:scaleX(0.9850);'>MOIS</span>
<span class="t m" style='left:268.00px;top:312px;font-size:12px;color:#525252;transform:scaleX(0.9026);'>MOIS.DECALER</span>
<span class="t m" style='left:268.00px;top:340px;font-size:12px;color:#525252;transform:scaleX(0.8686);'>NB.JOURS.OUVRES</span>
<span class="t m" style='left:268.00px;top:368px;font-size:12px;color:#525252;transform:scaleX(0.8793);'>NB.JOURS.OUVRES.INTL</span>
<span class="t m" style='left:268.00px;top:396px;font-size:12px;color:#525252;transform:scaleX(0.9387);'>NO.SEMAINE</span>
<span class="t m" style='left:268.00px;top:424px;font-size:12px;color:#525252;transform:scaleX(0.9190);'>NO.SEMAINE.ISO</span>
<span class="t m" style='left:268.00px;top:452px;font-size:12px;color:#525252;transform:scaleX(0.8875);'>SECONDE</span>
<span class="t m" style='left:268.00px;top:480px;font-size:12px;color:#525252;transform:scaleX(0.8418);'>SERIE.JOUR.OUVRE</span>
<span class="t m" style='left:268.00px;top:508px;font-size:12px;color:#525252;transform:scaleX(0.8584);'>SERIE.JOUR.OUVRE.INTL</span>
<span class="t m" style='left:268.00px;top:536px;font-size:12px;color:#525252;transform:scaleX(0.8836);'>TEMPS</span>
<span class="t m" style='left:268.00px;top:564px;font-size:12px;color:#525252;transform:scaleX(0.8970);'>TEMPSVAL</span>
<span class="t m" style='left:268.00px;top:595px;font-size:12px;color:#1c1c1c;letter-spacing:-0.027px;-webkit-text-stroke:0.15px #1c1c1c;'>Insérer une fonction...</span>
</div>
<div id="bl"></div><div id="br"></div><div id="bb"></div>
</div>
</body>
</html>
